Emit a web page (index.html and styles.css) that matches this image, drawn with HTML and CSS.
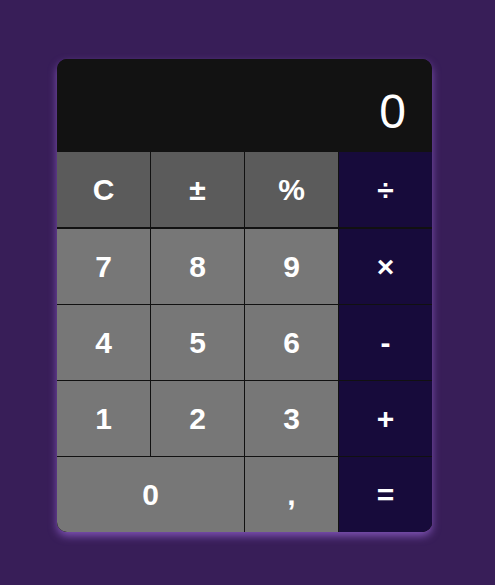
FILE: index.html
```html
<!DOCTYPE html>
<html lang="en">
<head>
<meta charset="utf-8">
<title>Calculator</title>
<link rel="stylesheet" href="styles.css">
</head>
<body>
<div class="stage">
  <div class="calculator">
    <div class="display">0</div>
    <div class="keys">
      <button class="key fn">C</button>
      <button class="key fn">±</button>
      <button class="key fn">%</button>
      <button class="key op op-top">÷</button>
      <button class="key num">7</button>
      <button class="key num">8</button>
      <button class="key num">9</button>
      <button class="key op">×</button>
      <button class="key num">4</button>
      <button class="key num">5</button>
      <button class="key num">6</button>
      <button class="key op">-</button>
      <button class="key num">1</button>
      <button class="key num">2</button>
      <button class="key num">3</button>
      <button class="key op">+</button>
      <button class="key num zero">0</button>
      <button class="key num">,</button>
      <button class="key op">=</button>
    </div>
  </div>
</div>
</body>
</html>
```
FILE: styles.css
```css
html, body {
  margin: 0;
  padding: 0;
  height: 100%;
}

body {
  background: #381e58;
  font-family: "Liberation Sans", Arial, sans-serif;
}

.stage {
  padding: 59px 0 0 57px;
}

.calculator {
  width: 375px;
  border-radius: 10px;
  overflow: hidden;
  background: #111111;
  box-shadow: 0 4px 8px rgba(150, 100, 210, 0.75);
}

.display {
  height: 93px;
  box-sizing: border-box;
  background: #121212;
  color: #ffffff;
  font-size: 48px;
  line-height: 55px;
  display: flex;
  justify-content: flex-end;
  align-items: flex-end;
  padding: 0 26px 13px 0;
}

.keys {
  display: grid;
  grid-template-columns: repeat(4, 93px);
  grid-template-rows: 76px 75px 75px 75px 75px;
  gap: 1px;
  background: #111111;
}

.key {
  border: 0;
  margin: 0;
  padding: 0;
  color: #ffffff;
  font-family: "Liberation Sans", Arial, sans-serif;
  font-weight: bold;
  font-size: 30px;
  display: flex;
  align-items: center;
  justify-content: center;
}

.fn {
  background: #5b5b5b;
  height: 75px;
  align-self: start;
}

.op-top {
  height: 75px;
  align-self: start;
}

.num {
  background: #777777;
}

.op {
  background: #170b3b;
}

.zero {
  grid-column: span 2;
}
```
